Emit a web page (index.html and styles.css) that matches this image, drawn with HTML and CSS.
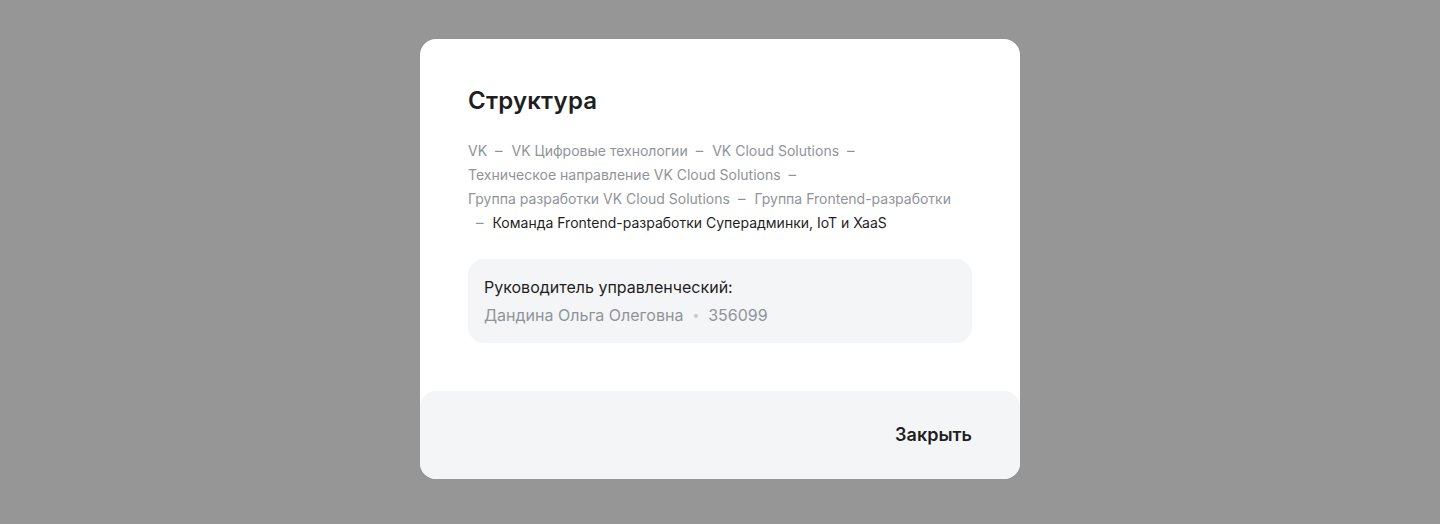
FILE: index.html
```html
<!DOCTYPE html>
<html lang="ru">
<head>
<meta charset="utf-8">
<link rel="stylesheet" href="styles.css">
</head>
<body>
<div class="overlay">
  <div class="modal">
    <div class="modal-body">
      <h2 class="title">Структура</h2>
      <div class="crumbs">
        <span class="crumb">VK</span><span class="sep">–</span>
        <span class="crumb">VK Цифровые технологии</span><span class="sep">–</span>
        <span class="crumb">VK Cloud Solutions</span><span class="sep">–</span>
        <span class="crumb">Техническое направление VK Cloud Solutions</span><span class="sep">–</span>
        <span class="crumb">Группа разработки VK Cloud Solutions</span><span class="sep">–</span>
        <span class="crumb">Группа Frontend-разработки</span><span class="sep">–</span>
        <span class="crumb current">Команда Frontend-разработки Суперадминки, IoT и XaaS</span>
      </div>
      <div class="info">
        <div class="info-label">Руководитель управленческий:</div>
        <div class="info-value"><span>Дандина Ольга Олеговна</span><span class="dot">•</span><span>356099</span></div>
      </div>
    </div>
    <div class="modal-footer">
      <button class="close-btn">Закрыть</button>
    </div>
  </div>
</div>
</body>
</html>
```
FILE: styles.css
```css
html, body {
  margin: 0;
  padding: 0;
}
body {
  font-family: Inter, "Noto Sans", sans-serif;
  background: #969696;
}
.overlay {
  width: 1440px;
  height: 524px;
  display: flex;
  justify-content: center;
  align-items: flex-start;
  padding-top: 39px;
  box-sizing: border-box;
}
.modal {
  width: 600px;
  background: #ffffff;
  border-radius: 16px;
  display: flex;
  flex-direction: column;
}
.modal-body {
  padding: 48px;
}
.title {
  margin: 0;
  font-size: 24px;
  line-height: 28px;
  font-weight: 600;
  color: #1f1f1f;
  letter-spacing: 0.2px;
}
.crumbs {
  margin-top: 24px;
  display: flex;
  flex-wrap: wrap;
  font-size: 14px;
  line-height: 24px;
  color: #909499;
}
.crumb {
  white-space: nowrap;
  flex-shrink: 0;
}
.crumb.current {
  color: #1f1f1f;
}
.sep {
  padding: 0 9px 0 8px;
  font-size: 15px;
  flex-shrink: 0;
}
.info {
  margin-top: 24px;
  background: #f4f5f7;
  border-radius: 16px;
  padding: 14px 16px;
  font-size: 16px;
  line-height: 28px;
}
.info-label {
  color: #1f1f1f;
}
.info-value {
  color: #909499;
  display: flex;
}
.dot {
  color: #c5c8cc;
  font-size: 12px;
  padding: 0 9px 0 9px;
}
.modal-footer {
  height: 88px;
  background: #f4f5f7;
  border-radius: 16px;
  display: flex;
  justify-content: flex-end;
  align-items: center;
  padding: 0 48px;
}
.close-btn {
  border: none;
  background: none;
  padding: 0;
  font-family: inherit;
  font-size: 18px;
  font-weight: 600;
  color: #1f1f1f;
  line-height: 24px;
  cursor: pointer;
}
```
